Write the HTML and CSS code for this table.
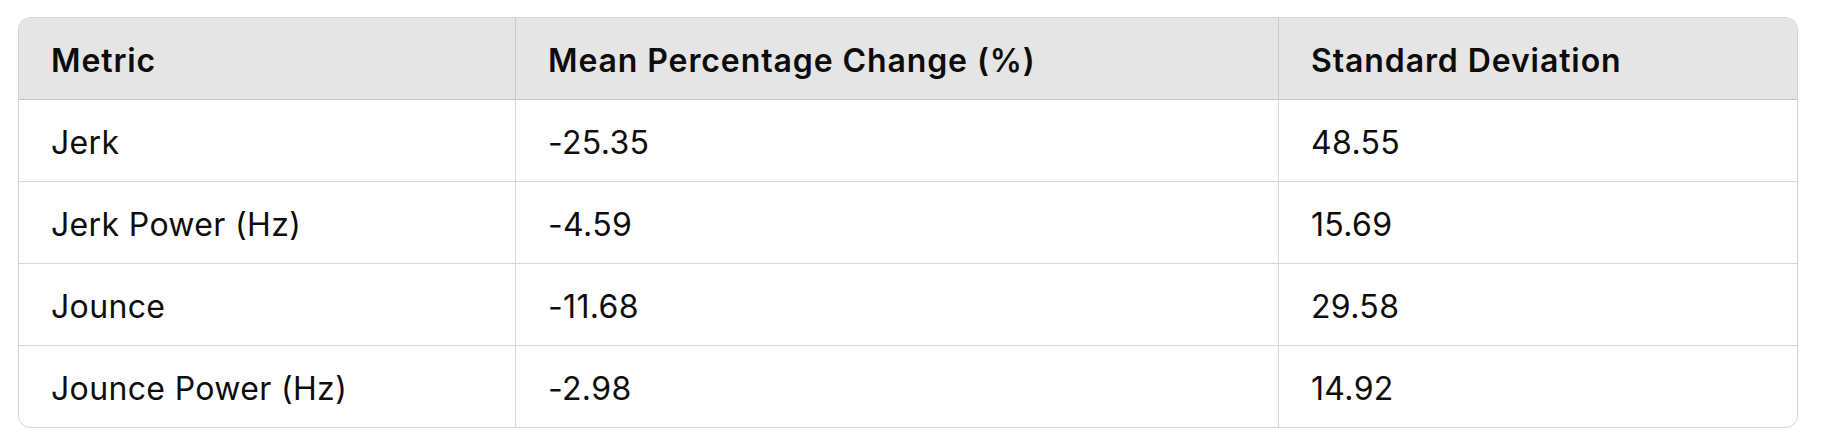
FILE: index.html
```html
<!DOCTYPE html>
<html lang="en">
<head>
<meta charset="utf-8">
<title>Metrics table</title>
<link rel="stylesheet" href="styles.css">
</head>
<body>
<div class="wrap">
  <table class="tbl">
    <colgroup>
      <col class="c1">
      <col class="c2">
      <col class="c3">
    </colgroup>
    <thead>
      <tr><th>Metric</th><th>Mean Percentage Change (%)</th><th>Standard Deviation</th></tr>
    </thead>
    <tbody>
      <tr><td>Jerk</td><td>-25.35</td><td>48.55</td></tr>
      <tr><td>Jerk Power (Hz)</td><td>-4.59</td><td>15.69</td></tr>
      <tr><td>Jounce</td><td>-11.68</td><td>29.58</td></tr>
      <tr><td>Jounce Power (Hz)</td><td>-2.98</td><td>14.92</td></tr>
    </tbody>
  </table>
</div>
</body>
</html>
```
FILE: styles.css
```css
html, body {
  margin: 0;
  background: #ffffff;
}
.wrap {
  padding: 17px 24px 0 18px;
}
.tbl {
  width: 100%;
  table-layout: fixed;
  border-collapse: separate;
  border-spacing: 0;
  border: 1px solid #d6d6d6;
  border-radius: 12px;
  overflow: hidden;
  font-family: Inter, "Noto Sans", sans-serif;
  font-size: 32px;
  line-height: 1.25;
  color: #0d0d0d;
}
.c1 { width: 496px; }
.c2 { width: 763px; }
.tbl th,
.tbl td {
  text-align: left;
  padding: 4px 32px 0;
  box-sizing: border-box;
  vertical-align: middle;
  border-left: 1px solid #d6d6d6;
  border-top: 1px solid #d6d6d6;
}
.tbl th {
  height: 81px;
  letter-spacing: 0.9px;
}
.tbl td {
  height: 82px;
  font-weight: 400;
  letter-spacing: 0.35px;
}
.tbl th:first-child,
.tbl td:first-child {
  border-left: none;
}
.tbl thead th {
  border-top: none;
  background: #e5e5e5;
  font-weight: 600;
  border-left-color: #cacaca;
}
.tbl tbody tr:first-child td {
  border-top-color: #c6c6c6;
}
```
